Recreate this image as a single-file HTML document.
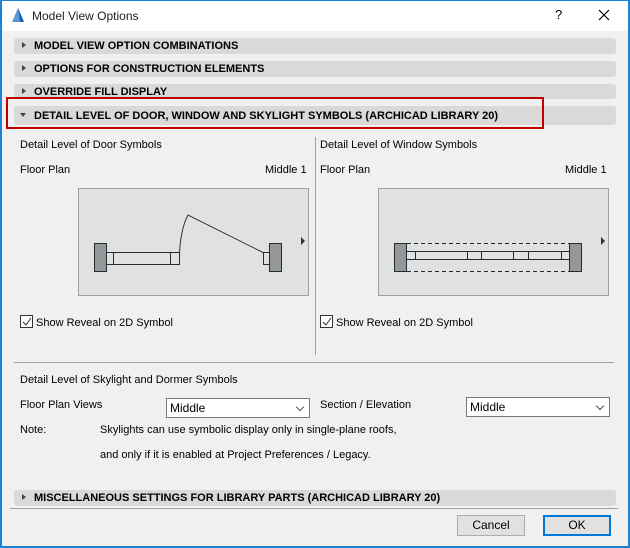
<!DOCTYPE html>
<html><head><style>
*{margin:0;padding:0;box-sizing:border-box}
body{width:630px;height:548px;background:#f0f0f0;font-family:"Liberation Sans",sans-serif;font-size:11px;color:#000;position:relative;overflow:hidden}
.frame{position:absolute;left:0;top:0;width:630px;height:548px;border:1px solid #1883d7;border-width:1px 2px 2px 2px}
.title{position:absolute;left:1px;top:1px;width:627px;height:30px;background:#fff}
.a{position:absolute;white-space:nowrap}
.t{margin-top:1px}
.bar{position:absolute;left:14px;width:602px;background:#d9d9d9;border-radius:3px;font-weight:bold;font-size:11px;padding-left:20px;line-height:17px}
.bar:before{content:"";position:absolute;left:8px;top:4px;border-left:4px solid #444;border-top:3.5px solid transparent;border-bottom:3.5px solid transparent}
.bar.open:before{left:6px;top:7px;border-top:4px solid #444;border-left:3.5px solid transparent;border-right:3.5px solid transparent;border-bottom:0}
.sel{position:absolute;height:20px;background:#fff;border:1px solid #7a7a7a;padding-left:3px;line-height:18px;font-size:12px}
.sel:after{content:"";position:absolute;right:6px;top:5px;width:5px;height:5px;border-right:1px solid #555;border-bottom:1px solid #555;transform:rotate(45deg)}
.btn{position:absolute;height:21px;background:#e1e1e1;border:1px solid #adadad;text-align:center;line-height:19px;font-size:12px}
.cb{position:absolute;width:13px;height:13px;border:1px solid #333;background:#fff}
</style></head><body>
<div class="title"></div>
<svg class="a" style="left:10px;top:7px" width="16" height="16"><path d="M2 15 L8 1 L14 15 Z" fill="#5b9bd5"/><path d="M8 1 L14 15 H10 Z" fill="#1f5fb0"/></svg>
<div class="a" style="left:32px;top:9px;font-size:12px;color:#222">Model View Options</div>
<div class="a" style="left:555px;top:7px;font-size:13px">?</div>
<svg class="a" style="left:598px;top:9px" width="12" height="12"><path d="M1 1L11 11M11 1L1 11" stroke="#000" stroke-width="1.2"/></svg>

<div class="bar" style="top:38px;height:16px">MODEL VIEW OPTION COMBINATIONS</div>
<div class="bar" style="top:61px;height:16px">OPTIONS FOR CONSTRUCTION ELEMENTS</div>
<div class="bar" style="top:84px;height:15px">OVERRIDE FILL DISPLAY</div>
<div class="bar open" style="top:106px;height:19px;line-height:20px">DETAIL LEVEL OF DOOR, WINDOW AND SKYLIGHT SYMBOLS (ARCHICAD LIBRARY 20)</div>
<div class="a" style="left:6px;top:97px;width:538px;height:32px;border:2px solid #c00000"></div>

<div class="a" style="left:20px;top:139px">Detail Level of Door Symbols</div>
<div class="a" style="left:20px;top:164px">Floor Plan</div>
<div class="a" style="left:265px;top:164px">Middle 1</div>
<div class="a" style="left:320px;top:139px">Detail Level of Window Symbols</div>
<div class="a" style="left:320px;top:164px">Floor Plan</div>
<div class="a" style="left:565px;top:164px">Middle 1</div>
<div class="a" style="left:315px;top:137px;width:1px;height:218px;background:#a0a0a0"></div>

<svg class="a" style="left:0;top:0" width="630" height="320">
<g stroke="#a0a0a0" fill="#e1e1e1"><rect x="78.5" y="188.5" width="230" height="107"/><rect x="378.5" y="188.5" width="230" height="107"/></g>
<g stroke="#222c33" stroke-width="1" fill="none">
<rect x="94.5" y="243.5" width="12" height="28" fill="#949899"/>
<rect x="269.5" y="243.5" width="12" height="28" fill="#949899"/>
<rect x="106.5" y="252.5" width="73" height="12"/>
<path d="M113.5 252.5V264.5M170.5 252.5V264.5"/>
<path d="M179.5 252.5 Q181 228 188 215 L263 252.5" stroke="#333"/>
<rect x="263.5" y="252.5" width="6" height="12"/>
<rect x="394.5" y="243.5" width="12" height="28" fill="#949899"/>
<rect x="569.5" y="243.5" width="12" height="28" fill="#949899"/>
<path d="M407 243.5H569M407 271.5H569" stroke-dasharray="4 3"/>
<rect x="406.5" y="251.5" width="163" height="8"/>
<path d="M415.5 251.5V259.5M467.5 251.5V259.5M481.5 251.5V259.5M513.5 251.5V259.5M528.5 251.5V259.5M561.5 251.5V259.5"/>
</g>
<path d="M301 237L305 241L301 245Z M601 237L605 241L601 245Z" fill="#333"/>
</svg>

<div class="cb" style="left:20px;top:315px"></div>
<svg class="a" style="left:21px;top:316px" width="12" height="12"><path d="M2 6L5 9L10 2" stroke="#333" fill="none"/></svg>
<div class="a" style="left:36px;top:317px">Show Reveal on 2D Symbol</div>
<div class="cb" style="left:320px;top:315px"></div>
<svg class="a" style="left:321px;top:316px" width="12" height="12"><path d="M2 6L5 9L10 2" stroke="#333" fill="none"/></svg>
<div class="a" style="left:336px;top:317px">Show Reveal on 2D Symbol</div>

<div class="a" style="left:14px;top:362px;width:600px;height:1px;background:#a0a0a0"></div>
<div class="a" style="left:20px;top:374px">Detail Level of Skylight and Dormer Symbols</div>
<div class="a" style="left:20px;top:399px">Floor Plan Views</div>
<div class="sel" style="left:166px;top:398px;width:144px">Middle</div>
<div class="a" style="left:320px;top:399px">Section / Elevation</div>
<div class="sel" style="left:466px;top:397px;width:144px">Middle</div>
<div class="a" style="left:20px;top:424px">Note:</div>
<div class="a" style="left:100px;top:424px">Skylights can use symbolic display only in single-plane roofs,</div>
<div class="a" style="left:100px;top:449px">and only if it is enabled at Project Preferences / Legacy.</div>

<div class="bar" style="top:490px;height:16px">MISCELLANEOUS SETTINGS FOR LIBRARY PARTS (ARCHICAD LIBRARY 20)</div>
<div class="a" style="left:10px;top:508px;width:608px;height:1px;background:#a0a0a0"></div>
<div class="btn" style="left:457px;top:515px;width:68px">Cancel</div>
<div class="btn" style="left:543px;top:515px;width:68px;border:2px solid #0078d7;line-height:17px">OK</div>
<div class="frame"></div>
</body></html>
